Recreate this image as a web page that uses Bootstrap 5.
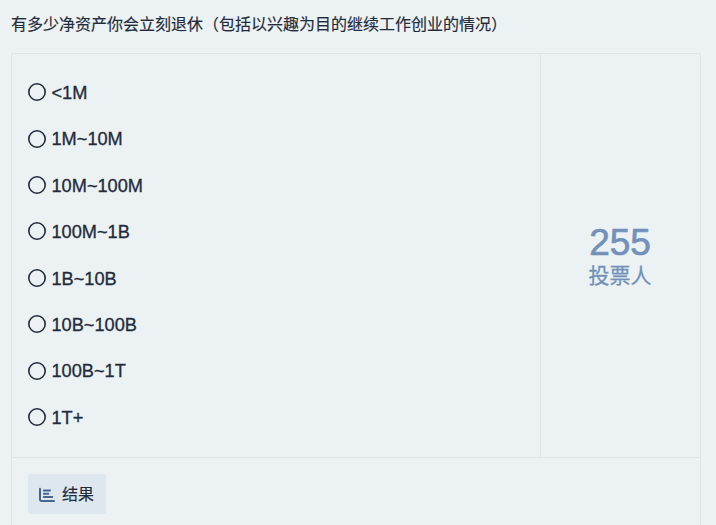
<!DOCTYPE html>
<html lang="zh-CN">
<head>
<meta charset="utf-8">
<meta name="viewport" content="width=device-width, initial-scale=1">
<title>投票</title>
<link href="https://cdn.jsdelivr.net/npm/bootstrap@5.3.0/dist/css/bootstrap.min.css" rel="stylesheet">
<style>
body{background:#ecf1f4;color:#222b3c;font-family:"Liberation Sans","Noto Sans CJK SC",sans-serif;height:525px;overflow:hidden}
.page{padding:13px 15px 0 11px}
.topic{font-size:16px;line-height:24px;height:24px;margin-bottom:16px;-webkit-text-stroke:.15px}
.poll{border:1px solid #dfe5ea;border-bottom:0;height:480px}
.poll-main{height:404px;border-bottom:1px solid #dfe5ea}
.options{padding:15px 16px 0}
.option{height:46.4px;font-size:18.2px;line-height:22px;gap:5.5px;-webkit-text-stroke:.3px}
.option svg{width:18px;height:18px}
.option span{padding-top:1.8px}
.votes{width:160px;padding:2px 1px 0 0;border-left:1px solid #dfe5ea;color:#7391b8}
.total{font-size:37px;line-height:37px;-webkit-text-stroke:.7px}
.caption-text{font-size:21px;line-height:29px;-webkit-text-stroke:.3px}
.poll-footer{padding:16px}
.result-btn{background:#dfe7ee;color:#222b3c;width:78px;height:40px;border-radius:3px;font-size:16px;line-height:24px;padding:1px 0 0 10px;border:0;gap:6px;-webkit-text-stroke:.15px}
.result-btn:hover{background:#d5dfe8}
</style>
<script src="https://cdn.jsdelivr.net/npm/bootstrap@5.3.0/dist/js/bootstrap.bundle.min.js"></script>
</head>
<body>
<main class="page">
  <div class="topic text-nowrap">有多少净资产你会立刻退休（包括以兴趣为目的继续工作创业的情况）</div>
  <section class="poll">
    <div class="poll-main d-flex">
      <ul class="options list-unstyled flex-grow-1 mb-0">
        <li class="option d-flex align-items-center"><svg viewBox="0 0 18 18"><circle cx="9" cy="9" r="8.2" fill="none" stroke="#222b3c" stroke-width="1.6"/></svg><span>&lt;1M</span></li>
        <li class="option d-flex align-items-center"><svg viewBox="0 0 18 18"><circle cx="9" cy="9" r="8.2" fill="none" stroke="#222b3c" stroke-width="1.6"/></svg><span>1M~10M</span></li>
        <li class="option d-flex align-items-center"><svg viewBox="0 0 18 18"><circle cx="9" cy="9" r="8.2" fill="none" stroke="#222b3c" stroke-width="1.6"/></svg><span>10M~100M</span></li>
        <li class="option d-flex align-items-center"><svg viewBox="0 0 18 18"><circle cx="9" cy="9" r="8.2" fill="none" stroke="#222b3c" stroke-width="1.6"/></svg><span>100M~1B</span></li>
        <li class="option d-flex align-items-center"><svg viewBox="0 0 18 18"><circle cx="9" cy="9" r="8.2" fill="none" stroke="#222b3c" stroke-width="1.6"/></svg><span>1B~10B</span></li>
        <li class="option d-flex align-items-center"><svg viewBox="0 0 18 18"><circle cx="9" cy="9" r="8.2" fill="none" stroke="#222b3c" stroke-width="1.6"/></svg><span>10B~100B</span></li>
        <li class="option d-flex align-items-center"><svg viewBox="0 0 18 18"><circle cx="9" cy="9" r="8.2" fill="none" stroke="#222b3c" stroke-width="1.6"/></svg><span>100B~1T</span></li>
        <li class="option d-flex align-items-center"><svg viewBox="0 0 18 18"><circle cx="9" cy="9" r="8.2" fill="none" stroke="#222b3c" stroke-width="1.6"/></svg><span>1T+</span></li>
      </ul>
      <div class="votes d-flex flex-column justify-content-center align-items-center flex-shrink-0">
        <div class="total">255</div>
        <div class="caption-text">投票人</div>
      </div>
    </div>
    <div class="poll-footer">
      <button type="button" class="btn result-btn d-flex align-items-center">
        <svg width="18" height="16" viewBox="0 0 18 16" fill="none" stroke="#456592" stroke-width="2" stroke-linecap="round" stroke-linejoin="round"><path d="M2 1.8V12.3Q2 14 3.7 14H16M5.8 3.4H12M5.8 6.7H10.3M5.8 10H14.2"/></svg>
        <span>结果</span>
      </button>
    </div>
  </section>
</main>
</body>
</html>
